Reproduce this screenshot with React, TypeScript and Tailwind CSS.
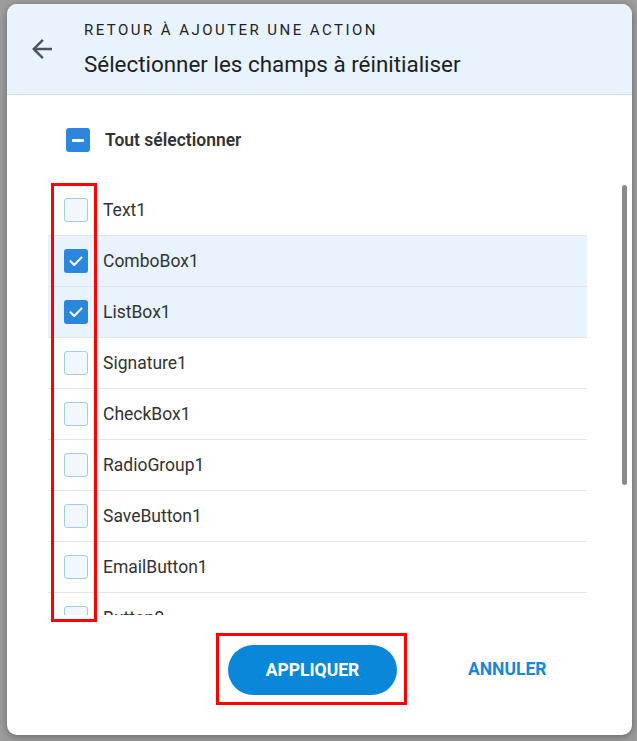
import React, { useState } from 'react';

const fields = [
  'Text1',
  'ComboBox1',
  'ListBox1',
  'Signature1',
  'CheckBox1',
  'RadioGroup1',
  'SaveButton1',
  'EmailButton1',
  'Button2',
];

const Box = ({ state }: { state: 'on' | 'off' | 'mixed' }) => {
  if (state === 'off') {
    return <div className="w-[24px] h-[24px] shrink-0 rounded-[3px] border border-[#9fcbed] bg-[#f1f7fd]" />;
  }
  return (
    <div className="w-[24px] h-[24px] shrink-0 rounded-[3px] bg-[#2a87dc] flex items-center justify-center">
      {state === 'on' ? (
        <svg width="16" height="16" viewBox="0 0 16 16" fill="none">
          <path d="M2.5 8.3 6.2 12 13.5 4.5" stroke="#fff" strokeWidth="2" strokeLinecap="round" strokeLinejoin="round" />
        </svg>
      ) : (
        <div className="w-[12px] h-[3px] rounded-[1px] bg-white" />
      )}
    </div>
  );
};

export default function App() {
  const [checked, setChecked] = useState<Record<string, boolean>>({ ComboBox1: true, ListBox1: true });

  const count = fields.filter((f) => checked[f]).length;
  const allState = count === 0 ? 'off' : count === fields.length ? 'on' : 'mixed';

  const toggleAll = () => {
    const next: Record<string, boolean> = {};
    if (allState !== 'on') fields.forEach((f) => (next[f] = true));
    setChecked(next);
  };

  return (
    <div className="w-full h-[741px] bg-[#9d9d9d] pt-[4px] pl-[7px] overflow-hidden" style={{ fontFamily: 'Roboto, "Noto Sans", sans-serif' }}>
      <div className="relative w-[625px] h-[731px] bg-white rounded-[10px] overflow-hidden flex flex-col shadow-[0_2px_8px_rgba(0,0,0,0.35)]">
        {/* Header */}
        <div className="h-[91px] shrink-0 bg-[#e8f3fd] border-b border-[#d3dde6] flex items-center pl-[20px]">
          <button className="w-[30px] h-[30px] shrink-0 text-[#50555b]">
            <svg width="30" height="30" viewBox="0 0 24 24" fill="currentColor">
              <path d="M20 11H7.83l5.59-5.59L12 4l-8 8 8 8 1.41-1.41L7.83 13H20v-2z" />
            </svg>
          </button>
          <div className="ml-[27px] flex flex-col self-start pt-[16px]">
            <div className="text-[15px] leading-[20px] tracking-[2.45px] text-[#222]">RETOUR À AJOUTER UNE ACTION</div>
            <div className="mt-[10px] text-[22.4px] leading-[28px] text-[#1e1e1e]">Sélectionner les champs à réinitialiser</div>
          </div>
        </div>

        {/* Select all */}
        <div className="mt-[33px] pl-[59px] h-[24px] flex items-center cursor-pointer" onClick={toggleAll}>
          <Box state={allState} />
          <span className="ml-[15px] text-[17.5px] font-semibold text-[#333]">Tout sélectionner</span>
        </div>

        {/* List */}
        <div className="mt-[33px] flex">
          <div className="ml-[41px] w-[539px] h-[430px] overflow-hidden">
            {fields.map((f) => (
              <div
                key={f}
                onClick={() => setChecked((p) => ({ ...p, [f]: !p[f] }))}
                className={`h-[51px] border-b border-[#e4e4e4] pl-[16px] flex items-center cursor-pointer ${
                  checked[f] ? 'bg-[#e8f3fd]' : 'bg-white'
                }`}
              >
                <Box state={checked[f] ? 'on' : 'off'} />
                <span className="ml-[15px] text-[17.5px] text-[#333]">{f}</span>
              </div>
            ))}
          </div>
          <div className="ml-[35px] w-[5px] h-[300px] rounded-full bg-[#8a8a8a]" />
        </div>

        {/* Footer */}
        <div className="mt-[18px] pl-[209px] flex items-center">
          <div className="border-[3px] border-[#f00] pt-[9px] pl-[9px] pr-[7px] pb-[7px]">
            <button className="w-[169px] h-[50px] rounded-full bg-[#0b87da] text-white text-[17.5px] font-bold">APPLIQUER</button>
          </div>
          <button className="ml-[61px] text-[17.5px] font-bold text-[#1787d6]">ANNULER</button>
        </div>

        {/* annotation over the checkbox column */}
        <div className="absolute left-[44px] top-[179px] w-[46px] h-[439px] border-[3px] border-[#f00] pointer-events-none" />
      </div>
    </div>
  );
}
